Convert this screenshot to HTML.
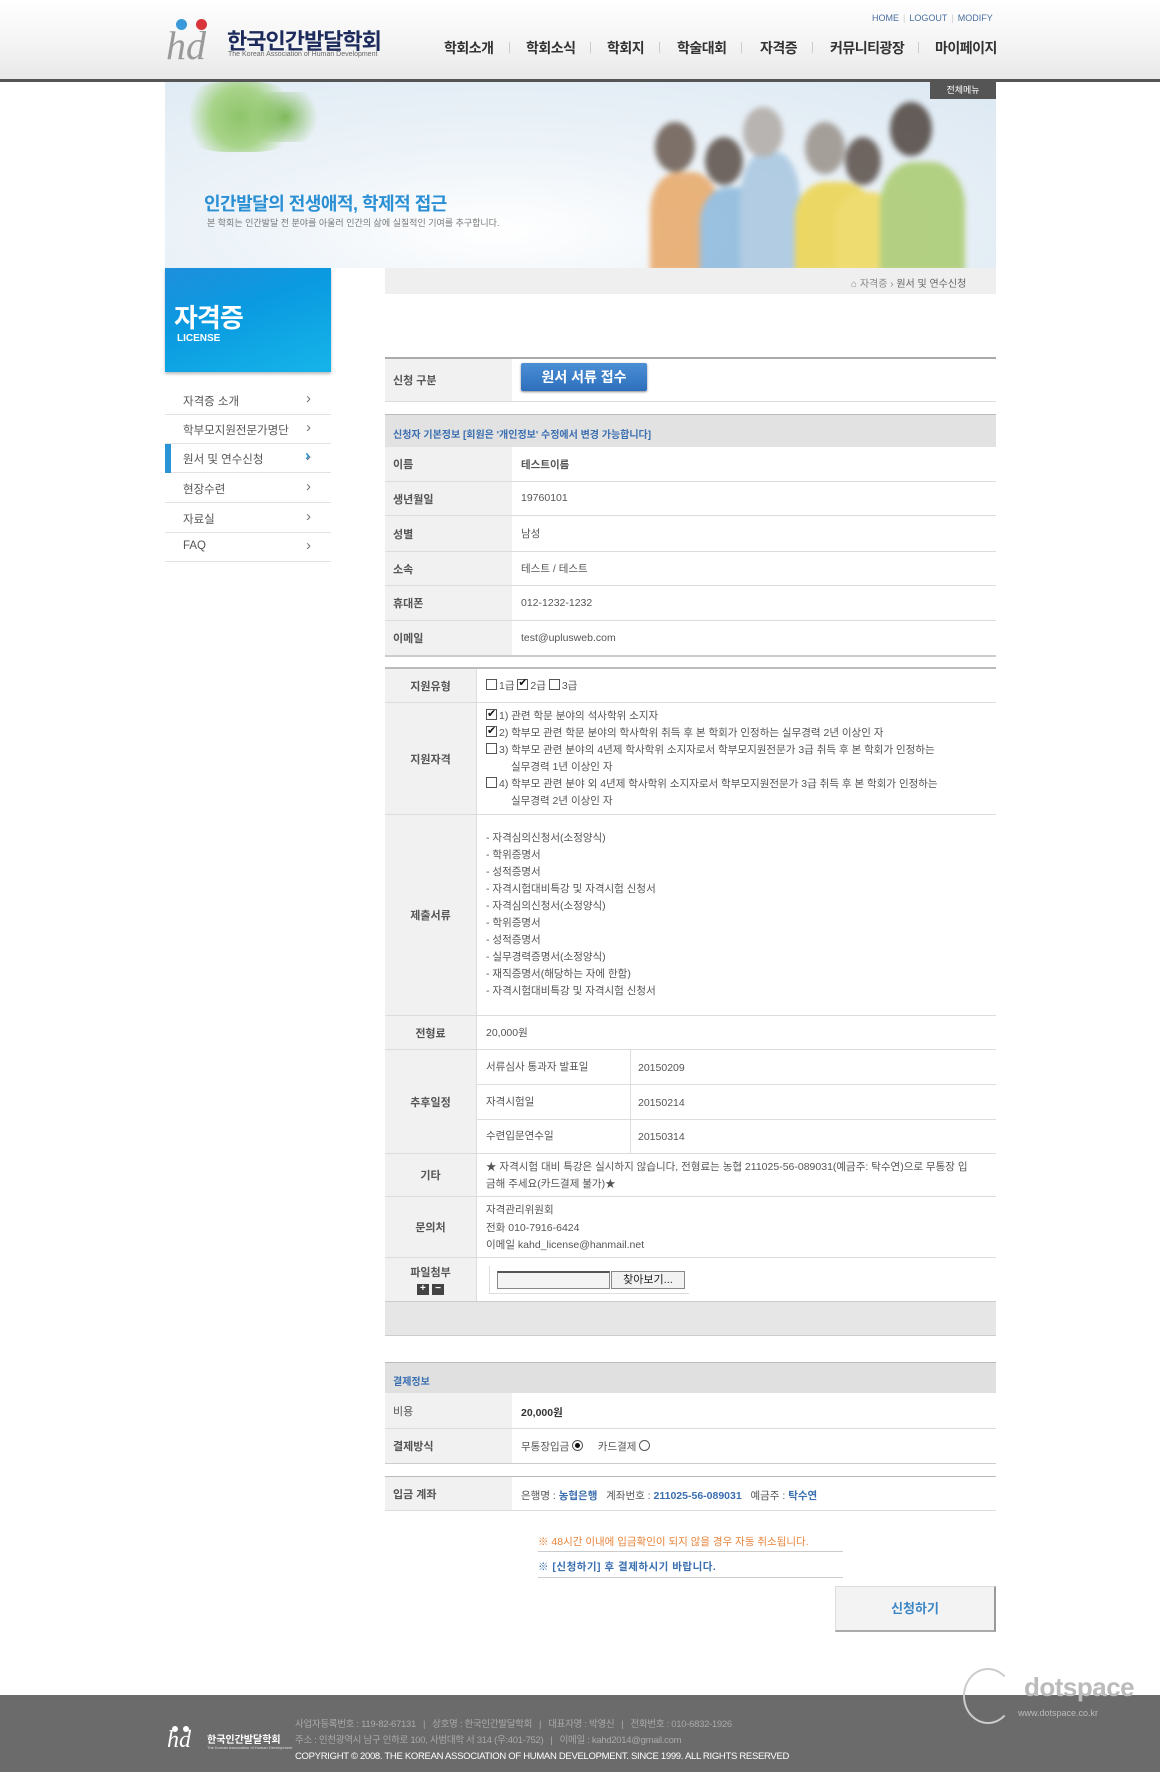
<!DOCTYPE html>
<html lang="ko"><head><meta charset="utf-8">
<style>
*{margin:0;padding:0;box-sizing:border-box}
body{width:1160px;height:1772px;position:relative;background:#fff;font-family:"Liberation Sans","Noto Sans CJK KR",sans-serif;color:#555;font-size:12px;overflow:hidden}
.a{position:absolute}
.hdr{left:0;top:0;width:1160px;height:79px;background:linear-gradient(#fff,#f3f3f3 60%,#e9e9e9)}
.hline{left:0;top:79px;width:1160px;height:3px;background:#555}
.nav{top:38px;font-size:14px;font-weight:bold;color:#333;white-space:nowrap;letter-spacing:-0.5px}
.sep{top:42px;width:1px;height:11px;background:#ccc}
.util{top:13px;left:872px;font-size:9px;color:#4a6fa0;white-space:nowrap}
.util span{color:#ccc;margin:0 4px}
.side{left:165px;width:166px;height:29px;border-bottom:1px solid #e2e2e2;font-size:11.5px;color:#555;padding:7px 0 0 18px}
.side:after{content:"›";position:absolute;right:20px;top:4px;font-size:15px;color:#777}
.bor{left:385px;width:611px;height:1px;background:#dcdcdc}
.lab{left:385px;background:#f1f1f1;font-size:11px;font-weight:bold;color:#555}
.lab1{width:127px;padding-left:8px;display:flex;align-items:center}
.lab2{width:92px;display:flex;align-items:center;justify-content:center;border-right:1px solid #ddd}
.val{font-size:10.5px;color:#555;white-space:nowrap}
.cb{display:inline-block;width:11px;height:11px;border:1px solid #555;vertical-align:-1px;margin-right:2px;position:relative;background:#fff}
.cb.on:after{content:"✔";position:absolute;left:0;top:-4px;font-size:11px;color:#111}
</style></head><body>

<div class="a hdr"></div>
<div class="a hline"></div>
<div class="a" style="left:176px;top:19px;width:11px;height:11px;border-radius:50%;background:#3a9ad9"></div>
<div class="a" style="left:196px;top:19px;width:11px;height:11px;border-radius:50%;background:#d9343a"></div>
<div class="a" style="left:166px;top:26px;font-family:'Liberation Serif',serif;font-style:italic;font-size:40px;color:#9a9a9a;line-height:1">hd</div>
<div class="a" style="left:227px;top:24px;font-size:22px;font-weight:bold;color:#1d2b5c;letter-spacing:-1px;white-space:nowrap">한국인간발달학회</div>
<div class="a" style="left:228px;top:51px;font-size:7px;color:#666;white-space:nowrap">The Korean Association of Human Development</div>

<div class="a util">HOME<span>|</span>LOGOUT<span>|</span>MODIFY</div>
<div class="a nav" style="left:444px">학회소개</div>
<div class="a sep" style="left:509px"></div>
<div class="a nav" style="left:526px">학회소식</div>
<div class="a sep" style="left:590px"></div>
<div class="a nav" style="left:607px">학회지</div>
<div class="a sep" style="left:659px"></div>
<div class="a nav" style="left:677px">학술대회</div>
<div class="a sep" style="left:741px"></div>
<div class="a nav" style="left:760px">자격증</div>
<div class="a sep" style="left:812px"></div>
<div class="a nav" style="left:830px">커뮤니티광장</div>
<div class="a sep" style="left:918px"></div>
<div class="a nav" style="left:935px">마이페이지</div>

<div class="a" style="left:165px;top:82px;width:831px;height:186px;background:radial-gradient(ellipse at 40% 80%,#fff 0,#eef4f9 35%,#dce8f2 100%);overflow:hidden">
  <div class="a" style="left:10px;top:0;width:130px;height:70px;border-radius:40%;background:radial-gradient(circle,#8fc46a 0,#a8d48a 40%,rgba(200,230,180,0) 70%)"></div>
  <div class="a" style="left:80px;top:10px;width:80px;height:50px;background:radial-gradient(circle,#7fba5a 0,rgba(180,220,150,0) 70%)"></div>
  <div style="position:absolute;left:0;top:0;width:831px;height:186px;filter:blur(3px);opacity:0.85">
  <div class="a" style="left:485px;top:90px;width:70px;height:100px;border-radius:40% 40% 0 0;background:#e8a766"></div>
  <div class="a" style="left:535px;top:105px;width:70px;height:90px;border-radius:40% 40% 0 0;background:#8cb8dc"></div>
  <div class="a" style="left:575px;top:70px;width:60px;height:120px;border-radius:40% 40% 0 0;background:#a7c6e0"></div>
  <div class="a" style="left:630px;top:100px;width:80px;height:90px;border-radius:40% 40% 0 0;background:#ecd34a"></div>
  <div class="a" style="left:670px;top:110px;width:60px;height:80px;border-radius:40% 40% 0 0;background:#f0d95a"></div>
  <div class="a" style="left:715px;top:80px;width:85px;height:110px;border-radius:40% 40% 0 0;background:#aacb6e"></div>
  <div class="a" style="left:490px;top:40px;width:40px;height:50px;border-radius:50%;background:#6a5a50"></div>
  <div class="a" style="left:540px;top:55px;width:38px;height:48px;border-radius:50%;background:#5a4e48"></div>
  <div class="a" style="left:578px;top:25px;width:40px;height:50px;border-radius:50%;background:#b0aaa5"></div>
  <div class="a" style="left:640px;top:40px;width:40px;height:52px;border-radius:50%;background:#9a928a"></div>
  <div class="a" style="left:680px;top:55px;width:36px;height:48px;border-radius:50%;background:#5a4e48"></div>
  <div class="a" style="left:725px;top:20px;width:42px;height:54px;border-radius:50%;background:#4e443e"></div>
  </div>
</div>
<div class="a" style="left:930px;top:82px;width:66px;height:17px;background:#555;color:#fff;font-size:9px;text-align:center;line-height:17px">전체메뉴</div>
<div class="a" style="left:204px;top:190px;font-size:18px;font-weight:bold;color:#2b8fd4;letter-spacing:-0.5px;white-space:nowrap">인간발달의 전생애적, 학제적 접근</div>
<div class="a" style="left:207px;top:216px;font-size:9px;color:#777;white-space:nowrap">본 학회는 인간발달 전 분야를 아울러 인간의 삶에 실질적인 기여를 추구합니다.</div>

<div class="a" style="left:165px;top:268px;width:166px;height:104px;background:linear-gradient(160deg,#1f8fdc 0,#0a9ae0 40%,#16b4ea 100%);box-shadow:0 2px 3px #bbb"></div>
<div class="a" style="left:174px;top:298px;font-size:26px;font-weight:bold;color:#fff;letter-spacing:-1px">자격증</div>
<div class="a" style="left:177px;top:333px;font-size:10px;font-weight:bold;color:#fff">LICENSE</div>
<div class="a side" style="top:386px">자격증 소개</div>
<div class="a side" style="top:415px">학부모지원전문가명단</div>
<div class="a side" style="top:444px;">원서 및 연수신청</div>
<div class="a" style="left:165px;top:444px;width:6px;height:29px;background:#2993d6"></div>
<div class="a" style="left:305px;top:447px;font-size:15px;color:#2993d6;font-weight:bold">›</div>
<div class="a side" style="top:474px">현장수련</div>
<div class="a side" style="top:504px">자료실</div>
<div class="a side" style="top:533px">FAQ</div>

<div class="a" style="left:385px;top:268px;width:611px;height:26px;background:#efefef"></div>
<div class="a" style="left:851px;top:275px;font-size:10px;color:#888;white-space:nowrap">⌂ 자격증 › <b style="color:#666;font-weight:normal">원서 및 연수신청</b></div>

<div class="a" style="left:385px;top:357px;width:611px;height:2px;background:#aaa"></div>
<div class="a lab lab1" style="top:359px;height:42px">신청 구분</div>
<div class="a" style="left:521px;top:363px;width:126px;height:28px;border-radius:2px;background:linear-gradient(#4b8fd6,#2d6fbc);color:#fff;font-size:14px;font-weight:bold;text-align:center;line-height:28px;box-shadow:0 1px 2px #888">원서 서류 접수</div>
<div class="a bor" style="top:401px"></div>

<div class="a" style="left:385px;top:414px;width:611px;height:33px;background:#e2e2e2;border-top:1px solid #bbb;font-size:10px;font-weight:bold;color:#3b6fb0;padding:11px 0 0 8px;white-space:nowrap">신청자 기본정보 [회원은 '개인정보' 수정에서 변경 가능합니다]</div>
<div class="a lab lab1" style="top:447px;height:34px">이름</div><div class="a val" style="left:521px;top:457px;font-weight:bold">테스트이름</div><div class="a bor" style="top:481px"></div>
<div class="a lab lab1" style="top:482px;height:33px">생년월일</div><div class="a val" style="left:521px;top:492px">19760101</div><div class="a bor" style="top:515px"></div>
<div class="a lab lab1" style="top:516px;height:35px">성별</div><div class="a val" style="left:521px;top:526px">남성</div><div class="a bor" style="top:551px"></div>
<div class="a lab lab1" style="top:552px;height:33px">소속</div><div class="a val" style="left:521px;top:561px">테스트 / 테스트</div><div class="a bor" style="top:585px"></div>
<div class="a lab lab1" style="top:586px;height:34px">휴대폰</div><div class="a val" style="left:521px;top:597px">012-1232-1232</div><div class="a bor" style="top:620px"></div>
<div class="a lab lab1" style="top:621px;height:34px">이메일</div><div class="a val" style="left:521px;top:632px">test@uplusweb.com</div><div class="a" style="left:385px;top:655px;width:611px;height:2px;background:#ccc"></div>

<div class="a" style="left:385px;top:667px;width:611px;height:2px;background:#bbb"></div>
<div class="a lab lab2" style="top:669px;height:33px">지원유형</div>
<div class="a val" style="left:486px;top:678px"><span class="cb"></span>1급 <span class="cb on"></span>2급 <span class="cb"></span>3급</div>
<div class="a bor" style="top:702px"></div>
<div class="a lab lab2" style="top:703px;height:111px">지원자격</div>
<div class="a val" style="left:486px;top:708px;line-height:17px">
<span class="cb on"></span>1) 관련 학문 분야의 석사학위 소지자<br>
<span class="cb on"></span>2) 학부모 관련 학문 분야의 학사학위 취득 후 본 학회가 인정하는 실무경력 2년 이상인 자<br>
<span class="cb"></span>3) 학부모 관련 분야의 4년제 학사학위 소지자로서 학부모지원전문가 3급 취득 후 본 학회가 인정하는<br>
<span style="padding-left:25px">실무경력 1년 이상인 자</span><br>
<span class="cb"></span>4) 학부모 관련 분야 외 4년제 학사학위 소지자로서 학부모지원전문가 3급 취득 후 본 학회가 인정하는<br>
<span style="padding-left:25px">실무경력 2년 이상인 자</span></div>
<div class="a bor" style="top:814px"></div>
<div class="a lab lab2" style="top:815px;height:200px">제출서류</div>
<div class="a val" style="left:486px;top:830px;line-height:17px">- 자격심의신청서(소정양식)<br>- 학위증명서<br>- 성적증명서<br>- 자격시험대비특강 및 자격시험 신청서<br>- 자격심의신청서(소정양식)<br>- 학위증명서<br>- 성적증명서<br>- 실무경력증명서(소정양식)<br>- 재직증명서(해당하는 자에 한함)<br>- 자격시험대비특강 및 자격시험 신청서</div>
<div class="a bor" style="top:1015px"></div>
<div class="a lab lab2" style="top:1016px;height:33px">전형료</div>
<div class="a val" style="left:486px;top:1025px">20,000원</div>
<div class="a bor" style="top:1049px"></div>
<div class="a lab lab2" style="top:1050px;height:103px">추후일정</div>
<div class="a" style="left:630px;top:1050px;width:1px;height:103px;background:#ddd"></div>
<div class="a val" style="left:486px;top:1059px">서류심사 통과자 발표일</div><div class="a val" style="left:638px;top:1062px">20150209</div>
<div class="a" style="left:477px;top:1084px;width:519px;height:1px;background:#ddd"></div>
<div class="a val" style="left:486px;top:1094px">자격시험일</div><div class="a val" style="left:638px;top:1097px">20150214</div>
<div class="a" style="left:477px;top:1119px;width:519px;height:1px;background:#ddd"></div>
<div class="a val" style="left:486px;top:1128px">수련입문연수일</div><div class="a val" style="left:638px;top:1131px">20150314</div>
<div class="a bor" style="top:1153px"></div>
<div class="a lab lab2" style="top:1154px;height:42px">기타</div>
<div class="a val" style="left:486px;top:1159px;line-height:17px">★ 자격시험 대비 특강은 실시하지 않습니다, 전형료는 농협 211025-56-089031(예금주: 탁수연)으로 무통장 입<br>금해 주세요(카드결제 불가)★</div>
<div class="a bor" style="top:1196px"></div>
<div class="a lab lab2" style="top:1197px;height:60px">문의처</div>
<div class="a val" style="left:486px;top:1202px;line-height:17.5px">자격관리위원회<br>전화 010-7916-6424<br>이메일 kahd_license@hanmail.net</div>
<div class="a bor" style="top:1257px"></div>
<div class="a lab lab2" style="top:1258px;height:43px;flex-direction:column">파일첨부<div style="margin-top:2px"><span style="display:inline-block;width:12px;height:11px;background:#444;color:#fff;font-size:10px;line-height:10px;text-align:center">+</span> <span style="display:inline-block;width:12px;height:11px;background:#444;color:#fff;font-size:10px;line-height:10px;text-align:center">−</span></div></div>
<div class="a" style="left:489px;top:1266px;width:200px;height:28px;border-left:1px solid #ddd;border-bottom:1px solid #ddd"></div>
<div class="a" style="left:497px;top:1271px;width:113px;height:18px;border:1px solid #888;border-top:2px solid #555;background:#f4f4f4"></div>
<div class="a" style="left:611px;top:1271px;width:74px;height:18px;border:1px solid #888;background:#f2f2f2;font-size:11px;color:#222;text-align:center;line-height:16px">찾아보기...</div>
<div class="a" style="left:385px;top:1301px;width:611px;height:35px;background:#e6e6e6;border-top:1px solid #ccc;border-bottom:1px solid #ccc"></div>

<div class="a" style="left:385px;top:1362px;width:611px;height:31px;background:#e0e0e0;border-top:1px solid #bbb;font-size:10px;font-weight:bold;color:#3b6fb0;padding:10px 0 0 8px">결제정보</div>
<div class="a lab lab1" style="top:1393px;height:35px;font-weight:normal">비용</div>
<div class="a val" style="left:521px;top:1405px;font-weight:bold;color:#333">20,000원</div>
<div class="a bor" style="top:1428px"></div>
<div class="a lab lab1" style="top:1429px;height:34px">결제방식</div>
<div class="a val" style="left:521px;top:1439px">무통장입금 <span style="display:inline-block;width:11px;height:11px;border:1px solid #555;border-radius:50%;vertical-align:-1px;position:relative"><span style="position:absolute;left:2px;top:2px;width:5px;height:5px;border-radius:50%;background:#111"></span></span> &nbsp;&nbsp;&nbsp; 카드결제 <span style="display:inline-block;width:11px;height:11px;border:1px solid #555;border-radius:50%;vertical-align:-1px"></span></div>
<div class="a" style="left:385px;top:1463px;width:611px;height:1px;background:#ccc"></div>
<div class="a" style="left:385px;top:1476px;width:611px;height:1px;background:#bbb"></div>
<div class="a lab lab1" style="top:1477px;height:33px">입금 계좌</div>
<div class="a val" style="left:521px;top:1488px">은행명 : <b style="color:#3b6fb0">농협은행</b> &nbsp; 계좌번호 : <b style="color:#3b6fb0">211025-56-089031</b> &nbsp; 예금주 : <b style="color:#3b6fb0">탁수연</b></div>
<div class="a bor" style="top:1510px"></div>

<div class="a" style="left:538px;top:1534px;font-size:10.5px;color:#e8833a;white-space:nowrap">※ 48시간 이내에 입금확인이 되지 않을 경우 자동 취소됩니다.</div>
<div class="a" style="left:538px;top:1551px;width:305px;height:1px;background:#ccc"></div>
<div class="a" style="left:538px;top:1559px;font-size:10.5px;font-weight:bold;color:#3b6fb0;white-space:nowrap;letter-spacing:0.5px">※ [신청하기] 후 결제하시기 바랍니다.</div>
<div class="a" style="left:538px;top:1577px;width:305px;height:1px;background:#ccc"></div>
<div class="a" style="left:835px;top:1586px;width:161px;height:46px;background:#f3f3f3;border:1px solid #ddd;border-right:2px solid #999;border-bottom:2px solid #aaa;font-size:13px;font-weight:bold;color:#3b87c6;text-align:center;line-height:44px">신청하기</div>

<div class="a" style="left:0;top:1695px;width:1160px;height:77px;background:#6b6b6b"></div>
<div class="a" style="left:963px;top:1668px;width:50px;height:56px;border:2px solid #ccc;border-right-color:transparent;border-radius:50%"></div>
<div class="a" style="left:1024px;top:1672px;font-size:26px;font-weight:bold;color:#bbb;letter-spacing:-0.5px">dotspace</div>
<div class="a" style="left:1018px;top:1708px;font-size:9px;color:#bbb">www.dotspace.co.kr</div>
<div class="a" style="left:172px;top:1726px;width:6px;height:6px;border-radius:50%;background:#fff"></div>
<div class="a" style="left:183px;top:1726px;width:6px;height:6px;border-radius:50%;background:#fff"></div>
<div class="a" style="left:167px;top:1728px;font-family:'Liberation Serif',serif;font-style:italic;font-size:24px;color:#fff;line-height:1">hd</div>
<div class="a" style="left:207px;top:1731px;font-size:10px;font-weight:bold;color:#fff;white-space:nowrap">한국인간발달학회</div>
<div class="a" style="left:207px;top:1745px;font-size:4px;color:#ddd;white-space:nowrap">The Korean Association of Human Development</div>
<div class="a" style="left:295px;top:1717px;font-size:9.5px;color:#aaa;line-height:16px;white-space:nowrap;letter-spacing:-0.3px">사업자등록번호 : 119-82-67131 &nbsp; | &nbsp; 상호명 : 한국인간발달학회 &nbsp; | &nbsp; 대표자명 : 박영신 &nbsp; | &nbsp; 전화번호 : 010-6832-1926<br>주소 : 인천광역시 남구 인하로 100, 사범대학 서 314 (우:401-752) &nbsp; | &nbsp; 이메일 : kahd2014@gmail.com<br><span style="color:#fff">COPYRIGHT © 2008. THE KOREAN ASSOCIATION OF HUMAN DEVELOPMENT. SINCE 1999. ALL RIGHTS RESERVED</span></div>
</body></html>
